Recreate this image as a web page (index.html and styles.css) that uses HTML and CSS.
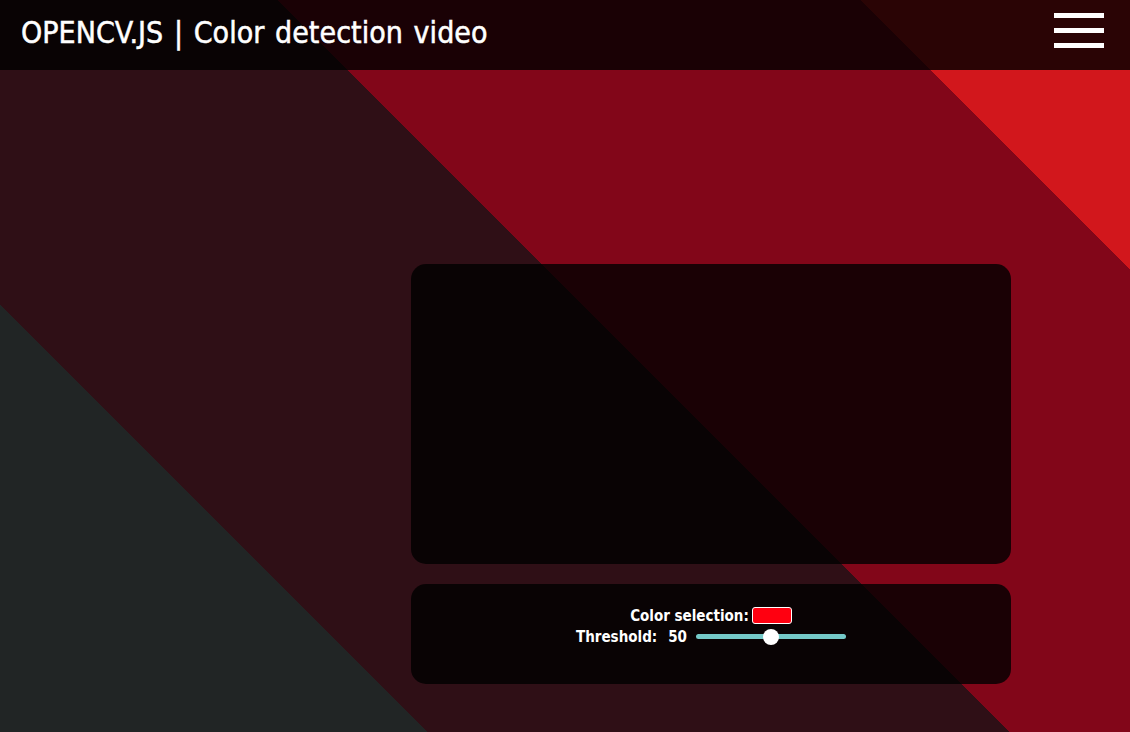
FILE: index.html
```html
<!DOCTYPE html>
<html lang="en">
<head>
<meta charset="utf-8">
<title>OPENCV.JS | Color detection video</title>
<link rel="stylesheet" href="styles.css">
</head>
<body>
<div class="page">
  <header class="topbar">
    <h1 class="title">OPENCV.JS | Color detection video</h1>
    <div class="burger" aria-label="menu">
      <span></span><span></span><span></span>
    </div>
  </header>
  <main class="main">
    <div class="column">
      <div class="card video"></div>
      <div class="card controls">
        <div class="row">
          <label>Color selection:</label><span class="swatch"></span>
        </div>
        <div class="row">
          <label>Threshold:</label><span class="value">50</span>
          <input class="slider" type="range" min="0" max="100" value="50">
        </div>
      </div>
    </div>
  </main>
</div>
</body>
</html>
```

FILE: styles.css
```css
html, body {
  margin: 0;
  padding: 0;
}

body {
  font-family: "DejaVu Sans Condensed", "DejaVu Sans", sans-serif;
  color: #fff;
}

.page {
  height: 732px;
  overflow: hidden;
  background: linear-gradient(45deg,
    #212525 0px, #212525 302px,
    #2f0f16 302px, #2f0f16 714px,
    #820619 714px, #820619 1126px,
    #d2171c 1126px, #d2171c 1400px);
}

.topbar {
  height: 70px;
  background: rgba(0, 0, 0, 0.8);
  display: flex;
  align-items: center;
  justify-content: space-between;
  padding: 0 26px 0 21px;
}

.title {
  margin: 0;
  font-size: 30px;
  font-weight: normal;
  word-spacing: 2px;
  letter-spacing: 0.05px;
  -webkit-text-stroke: 0.5px #fff;
  line-height: 1;
  padding-bottom: 5px;
}

.burger {
  width: 50px;
  display: flex;
  flex-direction: column;
  gap: 10px;
  padding-bottom: 10px;
}

.burger span {
  display: block;
  height: 5px;
  background: #fff;
}

.main {
  padding: 194px 0 0 411px;
}

.column {
  width: 600px;
  display: flex;
  flex-direction: column;
  gap: 20px;
}

.card {
  background: rgba(0, 0, 0, 0.8);
  border-radius: 15px;
}

.video {
  height: 300px;
}

.controls {
  height: 100px;
  box-sizing: border-box;
  padding-top: 21px;
  display: flex;
  flex-direction: column;
  align-items: center;
  font-weight: bold;
  font-size: 15px;
}

.row {
  display: flex;
  align-items: center;
  height: 21px;
}

.swatch {
  display: inline-block;
  width: 38px;
  height: 15px;
  border: 1px solid #fff;
  border-radius: 3px;
  background: #ff0010;
  margin-left: 3px;
}

.value {
  margin-left: 11px;
  margin-right: 9px;
}

.slider {
  -webkit-appearance: none;
  appearance: none;
  width: 150px;
  height: 5px;
  margin: 0;
  border-radius: 3px;
  background: #74c9c8;
  outline: none;
}

.slider::-webkit-slider-thumb {
  -webkit-appearance: none;
  appearance: none;
  width: 16px;
  height: 16px;
  border-radius: 50%;
  background: #fff;
  border: none;
}
```
